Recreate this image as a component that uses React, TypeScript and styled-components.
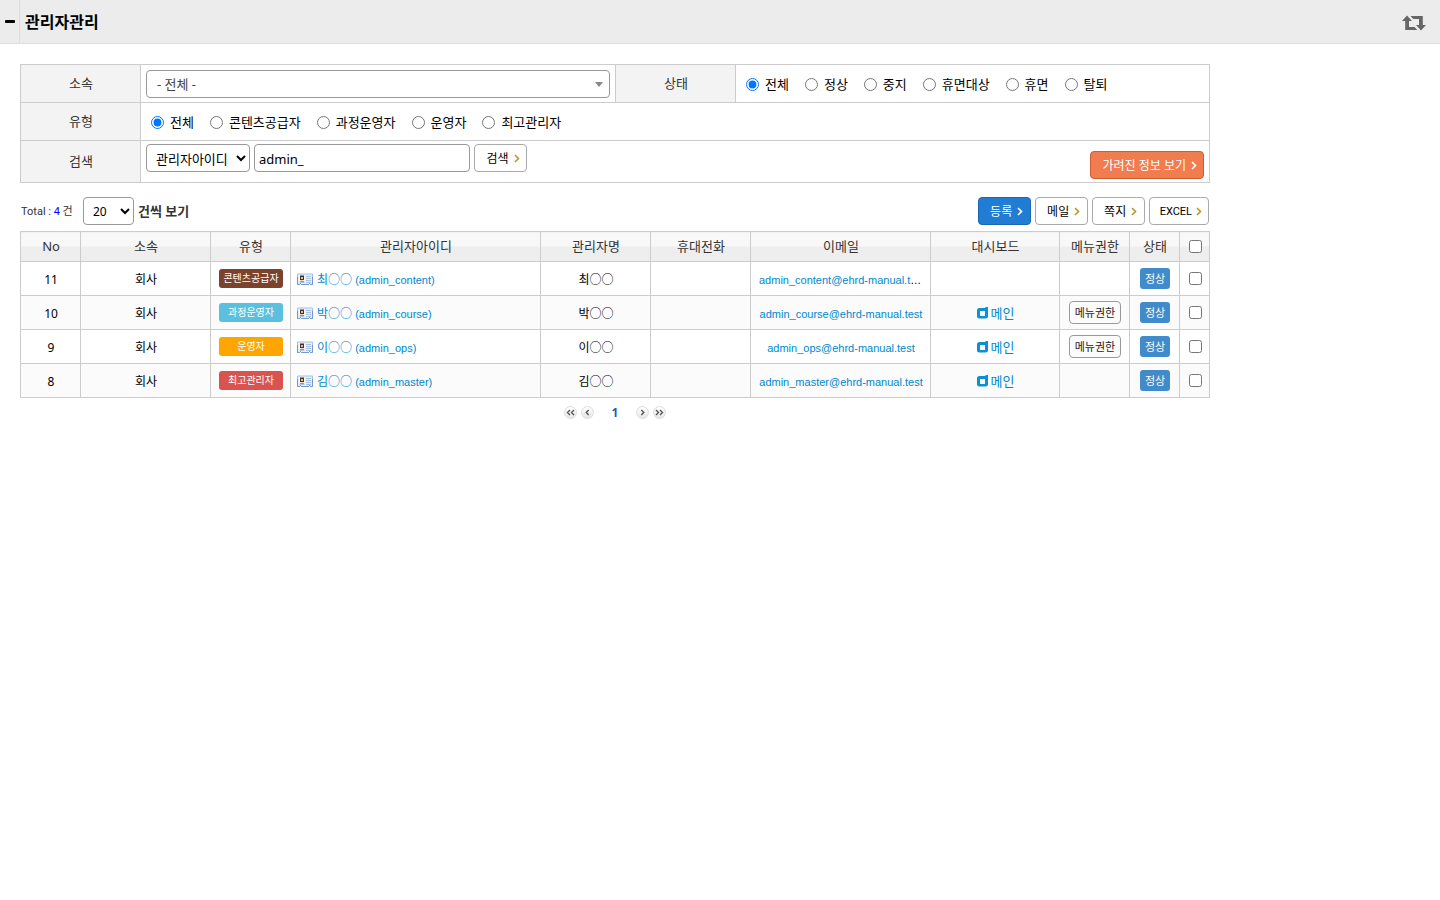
import React from "react";
import styled, { createGlobalStyle, css } from "styled-components";

const GlobalStyle = createGlobalStyle`
  *, *::before, *::after { box-sizing: border-box; }
  body {
    margin: 0;
    background: #fff;
    color: #000;
    font: 12px/18px "Noto Sans", "Noto Sans CJK KR", sans-serif;
  }
  input, select, button { font: inherit; color: inherit; margin: 0; }
  a { color: #0088cc; text-decoration: none; }
`;

const smallLatin = css`
  font-family: "Liberation Sans", "Noto Sans CJK KR", sans-serif;
  font-size: 11px;
`;

const Header = styled.header`
  display: flex;
  height: 44px;
  background: #ececec;
  border-bottom: 1px solid #ddd;
`;

const FoldButton = styled.button`
  width: 20px;
  padding: 0 0 2px;
  border: 0;
  border-right: 1px solid #ddd;
  background: transparent;
  line-height: 0;
`;

const Title = styled.h1`
  margin: 0;
  padding-left: 5px;
  flex: 1;
  font-size: 16px;
  line-height: 44px;
  font-weight: 700;
`;

const RefreshButton = styled.button`
  width: 52px;
  padding: 2px 0 0;
  border: 0;
  background: transparent;
  color: #666;
  line-height: 0;
`;

const Main = styled.main`
  max-width: 1230px;
  padding: 20px;
`;

const tableBase = css`
  width: 100%;
  border-collapse: collapse;
  table-layout: fixed;
  th, td { border: 1px solid #ccc; padding: 0; }
  th {
    padding: 0 0 2px 1px;
    color: #333;
    font-size: 13px;
    font-weight: 400;
  }
`;

const SearchTable = styled.table`
  ${tableBase}
  th { background: #f3f3f3; }
`;

const SearchRow = styled.tr<{ $tall?: boolean }>`
  height: ${(p) => (p.$tall ? 42 : 38)}px;
  td { vertical-align: ${(p) => (p.$tall ? "top" : "middle")}; }
`;

const Field = styled.div`
  display: flex;
  gap: 4px;
  padding: 3px 5px;
`;

const RadioGroup = styled.div`
  display: flex;
  gap: 16px;
  padding: 1px 10px 0;
`;

const RadioLabel = styled.label`
  display: flex;
  align-items: center;
  gap: 6px;
  font-size: 13px;
  input { width: 13px; height: 13px; margin-top: 1px; }
`;

const boxed = css`
  height: 28px;
  border: 1px solid #999;
  border-radius: 4px;
  background: #fff;
`;

const Combo = styled.div`
  position: relative;
  flex: 1;
  select {
    ${boxed}
    display: block;
    width: 100%;
    padding: 0 10px;
    appearance: none;
    color: #444;
    font-size: 13px;
  }
  svg {
    position: absolute;
    right: 7px;
    top: 12px;
    pointer-events: none;
  }
`;

const Select = styled.select<{ $width: number }>`
  ${boxed}
  width: ${(p) => p.$width}px;
  padding: 1px 0 0 5px;
  font-size: ${(p) => (p.$width > 60 ? 13 : 12)}px;
`;

const TextInput = styled.input`
  ${boxed}
  width: 216px;
  padding: 2px 4px 0;
  font-size: 13px;
`;

type Tone = "plain" | "primary" | "warm";
const tones: Record<Tone, [string, string, string, string]> = {
  plain: ["#fff", "#aaa", "#000", "#b8982f"],
  primary: ["#217dd3", "#1a68b3", "#fff", "#fff"],
  warm: ["#f07c4f", "#c9602f", "#fff", "#fff"],
};

const Button = styled.button<{ $tone: Tone; $end?: boolean; $latin?: boolean }>`
  ${boxed}
  display: flex;
  align-items: center;
  justify-content: center;
  gap: 5px;
  min-width: 53px;
  padding: 1px 6px 0 11px;
  background: ${(p) => tones[p.$tone][0]};
  border-color: ${(p) => tones[p.$tone][1]};
  color: ${(p) => tones[p.$tone][2]};
  white-space: nowrap;
  svg { color: ${(p) => tones[p.$tone][3]}; }
  ${(p) =>
    p.$latin &&
    css`
      gap: 4px;
      padding: 1px 6px 0 10px;
      font-family: Roboto, sans-serif;
      font-size: 11px;
    `}
  ${(p) => p.$end && "margin: 7px 0 0 auto;"}
`;

const Toolbar = styled.div`
  display: flex;
  align-items: center;
  gap: 4px;
  padding: 14px 1px 6px;
`;

const Total = styled.span`
  width: 58px;
  padding-top: 1px;
  color: #333;
  font-family: Roboto, "Noto Sans CJK KR", sans-serif;
  font-size: 11px;
  white-space: nowrap;
  b { font-weight: 400; color: #00f; }
`;

const PageSize = styled.label`
  display: flex;
  align-items: center;
  gap: 4px;
  margin-right: auto;
  color: #333;
  font-size: 13px;
  font-weight: 700;
  select { color: #000; font-weight: 400; }
`;

const ListTable = styled.table`
  ${tableBase}
  text-align: center;
  th {
    height: 30px;
    background: linear-gradient(#f8f8f8 50%, #eee 50%);
  }
  td { padding: 2px 0 0 1px; }
  tbody tr { height: 34px; }
  tbody tr:nth-child(even) { background: #fbfbfb; }
  input { display: block; width: 13px; height: 13px; margin: 0 auto 2px; }
  th input { margin: 2px auto 0; }
`;

const Badge = styled.span<{ $color: string }>`
  display: block;
  width: 64px;
  margin: 0 auto 2px;
  border-radius: 3px;
  background: ${(p) => p.$color};
  color: #fff;
  font-size: 10px;
  line-height: 19px;
`;

const Status = styled.span`
  display: block;
  width: 30px;
  margin: 0 auto 2px;
  border-radius: 3px;
  background: #428bca;
  color: #fff;
  font-size: 11px;
  line-height: 21px;
`;

const MemberLink = styled.a`
  display: flex;
  align-items: center;
  gap: 4px;
  padding-left: 5px;
`;

const MemberId = styled.span`
  ${smallLatin}
`;

const Email = styled.div`
  ${smallLatin}
  padding: 0 7px;
  overflow: hidden;
  text-overflow: ellipsis;
  white-space: nowrap;
`;

const DashLink = styled.a`
  display: flex;
  align-items: center;
  justify-content: center;
  gap: 3px;
  margin-bottom: 2px;
  font-size: 13px;
`;

const SmallButton = styled.button`
  display: block;
  width: 52px;
  height: 23px;
  margin: 0 auto 2px;
  padding: 0;
  border: 1px solid #999;
  border-radius: 4px;
  background: #fcfcfc;
  color: #222;
  font-size: 11px;
  line-height: 19px;
`;

const Pager = styled.nav`
  display: flex;
  justify-content: center;
  align-items: center;
  gap: 4px;
  padding-top: 4px;
  strong {
    width: 34px;
    padding-top: 2px;
    text-align: center;
    color: #1a5fb4;
  }
`;

const PagerButton = styled.button`
  width: 13px;
  height: 13px;
  padding: 0;
  border: 1px solid #ddd;
  border-radius: 50%;
  background: linear-gradient(#fff, #e6e6e6);
  color: #555;
  line-height: 0;
`;

const Chevron = () => (
  <svg width="6" height="9" viewBox="0 0 6 9" fill="none" stroke="currentColor" strokeWidth="1.6" aria-hidden="true">
    <path d="M1 1l3.5 3.5L1 8" />
  </svg>
);

const RefreshIcon = () => (
  <svg width="24" height="16" viewBox="0 0 24 16" fill="currentColor" aria-hidden="true">
    <path d="M5 .5l5 5.500H7v6h5.500l2.800 3H3.200V6H0z" />
    <path d="M19 15.500l5-5.500h-3.200V1H8.500L11.300 4H17v6h-3z" />
  </svg>
);

const CardIcon = () => (
  <svg width="16" height="13" viewBox="0 0 16 13" aria-hidden="true">
    <path d="M.5 1h15v10.500h-2l-1-1-1 1h-7l-1-1-1 1h-2z" fill="#e3efff" stroke="#a3c2ea" />
    <path d="M.5 4v7.500h2l1-1 1 1h7l1-1 1 1h2V4" fill="none" stroke="#6d98d2" />
    <rect x="2" y="2" width="6" height="7" fill="#fff8e8" />
    <path d="M3 2.500h4V7H3z" fill="#49331f" />
    <rect x="4" y="4" width="2" height="2" fill="#f0bd85" />
    <path d="M2.500 9.500q0-2 2.500-2t2.500 2z" fill="#7f9cc9" />
    <path d="M9 3.500h5M9 5.500h5M9 7.500h5M9 9.500h5" stroke="#a9c0e0" />
  </svg>
);

const DashIcon = () => (
  <svg width="11" height="13" viewBox="0 0 11 13" aria-hidden="true">
    <path
      d="M2.500 2H8l1-1h2v9q0 2.500-2.500 2.500h-6Q0 12.500 0 10V4.500Q0 2 2.500 2zM3 5v5h5V5z"
      fill="#0a90d3"
      fillRule="evenodd"
    />
  </svg>
);

const PagerIcon = ({ double, next }: { double?: boolean; next?: boolean }) => (
  <svg width="11" height="11" viewBox="0 0 11 11" fill="none" stroke="currentColor" strokeWidth="1.4" aria-hidden="true">
    <g transform={next ? "rotate(180 5.5 5.5)" : undefined}>
      {double ? <path d="M5 3L2.500 5.500 5 8M9 3L6.500 5.500 9 8" /> : <path d="M6.700 3L4.200 5.500l2.500 2.500" />}
    </g>
  </svg>
);

const Radios = ({ name, options }: { name: string; options: string[] }) => (
  <RadioGroup>
    {options.map((option, i) => (
      <RadioLabel key={option}>
        <input type="radio" name={name} defaultChecked={i === 0} />
        {option}
      </RadioLabel>
    ))}
  </RadioGroup>
);

const members = [
  { no: 11, type: "콘텐츠공급자", color: "#7b432c", name: "최○○", id: "admin_content", dash: false, menu: false },
  { no: 10, type: "과정운영자", color: "#5bc0de", name: "박○○", id: "admin_course", dash: true, menu: true },
  { no: 9, type: "운영자", color: "#ffa500", name: "이○○", id: "admin_ops", dash: true, menu: true },
  { no: 8, type: "최고관리자", color: "#d9534f", name: "김○○", id: "admin_master", dash: true, menu: false },
];

const columns: [string, number?][] = [
  ["No", 60], ["소속", 130], ["유형", 80], ["관리자아이디", 250], ["관리자명", 110], ["휴대전화", 100],
  ["이메일", 180], ["대시보드"], ["메뉴권한", 70], ["상태", 50],
];

export default function App() {
  return (
    <>
      <GlobalStyle />
      <Header>
        <FoldButton aria-label="메뉴 접기">
          <svg width="10" height="3" viewBox="0 0 10 3" aria-hidden="true"><rect width="10" height="3" rx="1" /></svg>
        </FoldButton>
        <Title>관리자관리</Title>
        <RefreshButton aria-label="새로고침"><RefreshIcon /></RefreshButton>
      </Header>
      <Main>
        <SearchTable>
          <colgroup>
            <col width="120" /><col width="475" /><col width="120" /><col />
          </colgroup>
          <tbody>
            <SearchRow>
              <th scope="row"><label htmlFor="company">소속</label></th>
              <td>
                <Field>
                  <Combo>
                    <select id="company"><option>- 전체 -</option></select>
                    <svg width="8" height="5" aria-hidden="true"><path d="M0 0h8L4 5z" fill="#888" /></svg>
                  </Combo>
                </Field>
              </td>
              <th scope="row">상태</th>
              <td><Radios name="status" options={["전체", "정상", "중지", "휴면대상", "휴면", "탈퇴"]} /></td>
            </SearchRow>
            <SearchRow>
              <th scope="row">유형</th>
              <td colSpan={3}><Radios name="type" options={["전체", "콘텐츠공급자", "과정운영자", "운영자", "최고관리자"]} /></td>
            </SearchRow>
            <SearchRow $tall>
              <th scope="row"><label htmlFor="keyword">검색</label></th>
              <td colSpan={3}>
                <Field>
                  <Select $width={104} aria-label="검색 조건"><option>관리자아이디</option></Select>
                  <TextInput id="keyword" type="text" defaultValue="admin_" />
                  <Button $tone="plain">검색<Chevron /></Button>
                  <Button $tone="warm" $end>가려진 정보 보기<Chevron /></Button>
                </Field>
              </td>
            </SearchRow>
          </tbody>
        </SearchTable>
        <Toolbar>
          <Total>Total : <b>4</b> 건</Total>
          <PageSize>
            <Select $width={51} defaultValue="20"><option>20</option></Select>
            건씩 보기
          </PageSize>
          <Button $tone="primary">등록<Chevron /></Button>
          <Button $tone="plain">메일<Chevron /></Button>
          <Button $tone="plain">쪽지<Chevron /></Button>
          <Button $tone="plain" $latin>EXCEL<Chevron /></Button>
        </Toolbar>
        <ListTable>
          <colgroup>
            {columns.map(([label, width]) => <col key={label} width={width} />)}
            <col width="30" />
          </colgroup>
          <thead>
            <tr>
              {columns.map(([label]) => <th key={label} scope="col">{label}</th>)}
              <th scope="col"><input type="checkbox" aria-label="전체 선택" /></th>
            </tr>
          </thead>
          <tbody>
            {members.map((m) => (
              <tr key={m.no}>
                <td>{m.no}</td>
                <td>회사</td>
                <td><Badge $color={m.color}>{m.type}</Badge></td>
                <td>
                  <MemberLink href="#">
                    <CardIcon />
                    <span>{m.name} <MemberId>({m.id})</MemberId></span>
                  </MemberLink>
                </td>
                <td>{m.name}</td>
                <td />
                <td><Email><a href="#">{m.id}@ehrd-manual.test</a></Email></td>
                <td>{m.dash && <DashLink href="#"><DashIcon />메인</DashLink>}</td>
                <td>{m.menu && <SmallButton>메뉴권한</SmallButton>}</td>
                <td><Status>정상</Status></td>
                <td><input type="checkbox" aria-label={`${m.name} 선택`} /></td>
              </tr>
            ))}
          </tbody>
        </ListTable>
        <Pager aria-label="페이지">
          <PagerButton aria-label="처음"><PagerIcon double /></PagerButton>
          <PagerButton aria-label="이전"><PagerIcon /></PagerButton>
          <strong>1</strong>
          <PagerButton aria-label="다음"><PagerIcon next /></PagerButton>
          <PagerButton aria-label="마지막"><PagerIcon double next /></PagerButton>
        </Pager>
      </Main>
    </>
  );
}
